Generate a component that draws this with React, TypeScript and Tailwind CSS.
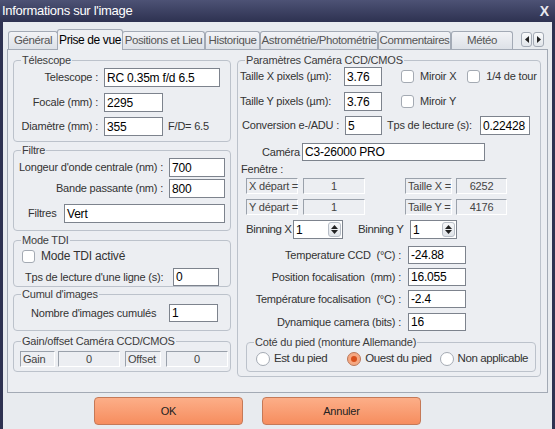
import React from 'react';

const tabs = [
  { label: 'Général', w: 'w-[50px]' },
  { label: 'Prise de vue', w: 'w-[66px]', active: true },
  { label: 'Positions et Lieu', w: 'w-[83px]' },
  { label: 'Historique', w: 'w-[55px]' },
  { label: 'Astrométrie/Photométrie', w: 'w-[118px]' },
  { label: 'Commentaires', w: 'w-[73px]' },
  { label: 'Météo', w: 'w-[62px]' },
];

function Group({ title, className = '', children }: { title: string; className?: string; children?: React.ReactNode }) {
  return (
    <fieldset className={`border border-[#bcc2cb] rounded-[4px] ${className}`}>
      <legend className="ml-[7px] px-[1px] leading-[14px] text-[#3c3c3c]">{title}</legend>
      {children}
    </fieldset>
  );
}

function TextBox({ value, className = '' }: { value: string; className?: string }) {
  return (
    <div className={`shrink-0 bg-white border border-[#7d838d] px-[2px] flex items-center text-[12px] text-black leading-none ${className}`}>
      {value}
    </div>
  );
}

function ReadBox({ value, className = '', center = false }: { value: string; className?: string; center?: boolean }) {
  return (
    <div
      className={`shrink-0 h-[16px] border-t border-l border-[#9aa1ab] border-b border-r border-b-white border-r-white flex items-center px-[2px] text-[#444] leading-none ${center ? 'justify-center' : ''} ${className}`}
    >
      {value}
    </div>
  );
}

function Check({ label, className = '' }: { label: string; className?: string }) {
  return (
    <div className={`flex items-center shrink-0 ${className}`}>
      <div className="w-[13px] h-[13px] bg-white border border-[#a4aab3] rounded-[3px]" />
      <span className="ml-[6px]">{label}</span>
    </div>
  );
}

function Radio({ label, checked = false, className = '' }: { label: string; checked?: boolean; className?: string }) {
  return (
    <div className={`flex items-center shrink-0 ${className}`}>
      <div
        className={`w-[14px] h-[14px] rounded-full border flex items-center justify-center ${
          checked ? 'border-[#b9795c] bg-[#f6a882]' : 'border-[#a4aab3] bg-white'
        }`}
      >
        {checked && <div className="w-[6px] h-[6px] rounded-full bg-[#d8501c]" />}
      </div>
      <span className="ml-[4px]">{label}</span>
    </div>
  );
}

function Spin({ value, className = '' }: { value: string; className?: string }) {
  return (
    <div className={`shrink-0 h-[19px] bg-white border border-[#7d838d] flex items-center justify-between pl-[2px] pr-[1px] text-[12px] text-black leading-none ${className}`}>
      <span>{value}</span>
      <div className="w-[13px] h-[15px] rounded-[3px] border border-[#b8bec7] bg-gradient-to-b from-[#f7f8fa] to-[#dfe3e8] flex flex-col items-center justify-center gap-[1px]">
        <svg width="7" height="4" viewBox="0 0 7 4"><path d="M0 4 L3.5 0 L7 4 Z" fill="#222" /></svg>
        <svg width="7" height="4" viewBox="0 0 7 4"><path d="M0 0 L3.5 4 L7 0 Z" fill="#222" /></svg>
      </div>
    </div>
  );
}

function Button({ label, className = '' }: { label: string; className?: string }) {
  return (
    <div
      className={`h-[28px] rounded-[4px] border border-[#c57957] bg-gradient-to-b from-[#fcae88] to-[#f68d5e] flex items-center justify-center text-[#222] ${className}`}
    >
      {label}
    </div>
  );
}

export default function App() {
  return (
    <div
      className="w-[555px] h-[429px] bg-[#2e3251] flex flex-col overflow-hidden whitespace-nowrap text-[11px] tracking-[-0.2px] text-[#333]"
      style={{ fontFamily: '"Liberation Sans", Arial, sans-serif' }}
    >
      {/* Title bar */}
      <div className="h-[22px] shrink-0 flex items-center justify-between pl-[2px] pr-[6px] bg-gradient-to-b from-[#4d5275] to-[#2e3251]">
        <span className="text-white text-[13px] tracking-[-0.3px]">Informations sur l'image</span>
        <span className="text-[#e8e8ee] text-[14px] font-bold">X</span>
      </div>

      {/* Body */}
      <div className="flex-1 mx-[3px] bg-[#e8ebef] flex flex-col pt-[7px] px-[4px]">
        {/* Tabs */}
        <div className="h-[21px] flex items-end pl-[1px] relative z-10">
          <div className="flex items-end w-[511px] overflow-hidden">
            {tabs.map((t) =>
              t.active ? (
                <div
                  key={t.label}
                  className={`${t.w} shrink-0 h-[21px] -mx-[1px] bg-[#eef0f3] border border-b-0 border-[#a3aab5] rounded-t-[3px] flex items-center justify-center text-[12px] tracking-[-0.4px] text-black`}
                >
                  {t.label}
                </div>
              ) : (
                <div
                  key={t.label}
                  className={`${t.w} shrink-0 h-[18px] mb-[1px] bg-gradient-to-b from-[#f2f3f6] to-[#dde1e7] border border-b-0 border-[#a3aab5] rounded-t-[3px] flex items-center justify-center overflow-hidden text-[11.5px] tracking-[-0.4px] text-[#555]`}
                >
                  {t.label}
                </div>
              )
            )}
          </div>
          <div className="flex gap-[1px] mb-[3px] ml-[2px]">
            <div className="w-[11px] h-[15px] rounded-[3px] border border-[#a3aab5] bg-gradient-to-b from-[#fafbfc] to-[#e1e5ea] flex items-center justify-center">
              <svg width="4" height="7" viewBox="0 0 4 7"><path d="M4 0 L0 3.5 L4 7 Z" fill="#222" /></svg>
            </div>
            <div className="w-[11px] h-[15px] rounded-[3px] border border-[#a3aab5] bg-gradient-to-b from-[#fafbfc] to-[#e1e5ea] flex items-center justify-center">
              <svg width="4" height="7" viewBox="0 0 4 7"><path d="M0 0 L4 3.5 L0 7 Z" fill="#222" /></svg>
            </div>
          </div>
        </div>

        {/* Tab panel */}
        <div className="h-[344px] -mt-[1px] border border-[#a3aab5] bg-[#eceef2] flex pl-[5px] pt-[3px]">
          {/* Left column */}
          <div className="w-[218px] flex flex-col shrink-0">
            <Group title="Télescope" className="h-[89px]">
              <div className="flex items-center mt-[1px]">
                <span className="w-[84px] text-right">Telescope :</span>
                <TextBox value="RC 0.35m f/d 6.5" className="ml-[6px] w-[116px] h-[19px]" />
              </div>
              <div className="flex items-center mt-[6px]">
                <span className="w-[84px] text-right">Focale (mm) :</span>
                <TextBox value="2295" className="ml-[6px] w-[59px] h-[19px]" />
              </div>
              <div className="flex items-center mt-[5px]">
                <span className="w-[84px] text-right">Diamètre (mm) :</span>
                <TextBox value="355" className="ml-[6px] w-[59px] h-[19px]" />
                <span className="ml-[5px]">F/D= 6.5</span>
              </div>
            </Group>

            <Group title="Filtre" className="h-[88px] mt-[1px]">
              <div className="flex items-center mt-[1px]">
                <span className="w-[149px] text-right">Longeur d'onde centrale (nm) :</span>
                <TextBox value="700" className="ml-[6px] w-[56px] h-[19px]" />
              </div>
              <div className="flex items-center mt-[2px]">
                <span className="w-[149px] text-right">Bande passante (nm) :</span>
                <TextBox value="800" className="ml-[6px] w-[56px] h-[19px]" />
              </div>
              <div className="flex items-center mt-[6px]">
                <span className="ml-[14px] w-[36px]">Filtres</span>
                <TextBox value="Vert" className="w-[161px] h-[19px]" />
              </div>
            </Group>

            <Group title="Mode TDI" className="h-[54px] mt-[2px]">
              <Check label="Mode TDI activé" className="ml-[8px] text-[12px]" />
              <div className="flex items-center mt-[3px]">
                <span className="ml-[11px] w-[148px]">Tps de lecture d'une ligne (s):</span>
                <TextBox value="0" className="w-[46px] h-[18px]" />
              </div>
            </Group>

            <Group title="Cumul d'images" className="h-[44px]">
              <div className="flex items-center mt-[3px]">
                <span className="ml-[17px] w-[138px]">Nombre d'images cumulés</span>
                <TextBox value="1" className="w-[49px] h-[18px]" />
              </div>
            </Group>

            <Group title="Gain/offset Caméra CCD/CMOS" className="h-[38px] mt-[3px]">
              <div className="flex items-center mt-[3px] pl-[6px]">
                <ReadBox value="Gain" className="w-[35px]" />
                <ReadBox value="0" center className="ml-[3px] w-[62px]" />
                <ReadBox value="Offset" className="ml-[5px] w-[36px]" />
                <ReadBox value="0" center className="ml-[5px] w-[62px]" />
              </div>
            </Group>
          </div>

          {/* Right column */}
          <Group title="Paramètres Caméra CCD/CMOS" className="ml-[6px] w-[304px] h-[324px] shrink-0">
            <div className="flex items-center mt-[0px]">
              <span className="ml-[2px] w-[104px]">Taille X pixels (µm):</span>
              <TextBox value="3.76" className="w-[38px] h-[19px]" />
              <Check label="Miroir X" className="ml-[19px]" />
              <Check label="1/4 de tour" className="ml-[11px]" />
            </div>
            <div className="flex items-center mt-[6px]">
              <span className="ml-[2px] w-[104px]">Taille Y pixels (µm):</span>
              <TextBox value="3.76" className="w-[38px] h-[19px]" />
              <Check label="Miroir Y" className="ml-[19px]" />
            </div>
            <div className="flex items-center mt-[5px]">
              <span className="ml-[4px] w-[103px]">Conversion e-/ADU :</span>
              <TextBox value="5" className="w-[37px] h-[19px]" />
              <span className="ml-[5px] w-[93px]">Tps de lecture (s):</span>
              <TextBox value="0.22428" className="w-[50px] h-[19px]" />
            </div>
            <div className="flex items-center mt-[8px]">
              <span className="ml-[24px] w-[40px]">Caméra</span>
              <TextBox value="C3-26000 PRO" className="w-[183px] h-[18px]" />
            </div>
            <div className="ml-[3px] mt-[1px] leading-[14px]">Fenêtre :</div>
            <div className="flex items-center mt-[2px] pl-[8px]">
              <ReadBox value="X départ =" className="w-[52px]" />
              <ReadBox value="1" center className="ml-[5px] w-[62px]" />
              <ReadBox value="Taille X =" className="ml-[40px] w-[47px]" />
              <ReadBox value="6252" center className="ml-[4px] w-[51px]" />
            </div>
            <div className="flex items-center mt-[5px] pl-[8px]">
              <ReadBox value="Y départ =" className="w-[52px]" />
              <ReadBox value="1" center className="ml-[5px] w-[62px]" />
              <ReadBox value="Taille Y =" className="ml-[40px] w-[47px]" />
              <ReadBox value="4176" center className="ml-[4px] w-[51px]" />
            </div>
            <div className="flex items-center mt-[5px]">
              <span className="ml-[8px] w-[47px] text-[11.5px] tracking-[-0.4px]">Binning X</span>
              <Spin value="1" className="w-[50px]" />
              <span className="ml-[15px] w-[52px] text-[11.5px] tracking-[-0.4px]">Binning Y</span>
              <Spin value="1" className="w-[47px]" />
            </div>
            <div className="flex items-center mt-[7px]">
              <span className="w-[163px] text-right">Temperature CCD&nbsp;&nbsp;(°C) :</span>
              <TextBox value="-24.88" className="ml-[7px] w-[58px] h-[18px]" />
            </div>
            <div className="flex items-center mt-[4px]">
              <span className="w-[163px] text-right">Position focalisation&nbsp;&nbsp;(mm) :</span>
              <TextBox value="16.055" className="ml-[7px] w-[58px] h-[18px]" />
            </div>
            <div className="flex items-center mt-[4px]">
              <span className="w-[163px] text-right">Température focalisation&nbsp;&nbsp;(°C) :</span>
              <TextBox value="-2.4" className="ml-[7px] w-[58px] h-[18px]" />
            </div>
            <div className="flex items-center mt-[5px]">
              <span className="w-[163px] text-right">Dynamique camera (bits) :</span>
              <TextBox value="16" className="ml-[7px] w-[58px] h-[18px]" />
            </div>
            <Group title="Coté du pied (monture Allemande)" className="ml-[8px] mt-[4px] w-[290px] h-[37px]">
              <div className="flex items-center mt-[1px] text-[11.5px] tracking-[-0.4px]">
                <Radio label="Est du pied" className="ml-[9px]" />
                <Radio label="Ouest du pied" checked className="ml-[20px]" />
                <Radio label="Non applicable" className="ml-[8px]" />
              </div>
            </Group>
          </Group>
        </div>

        {/* Buttons */}
        <div className="flex mt-[4px] pl-[87px]">
          <Button label="OK" className="w-[149px]" />
          <Button label="Annuler" className="ml-[19px] w-[159px]" />
        </div>
      </div>
    </div>
  );
}
